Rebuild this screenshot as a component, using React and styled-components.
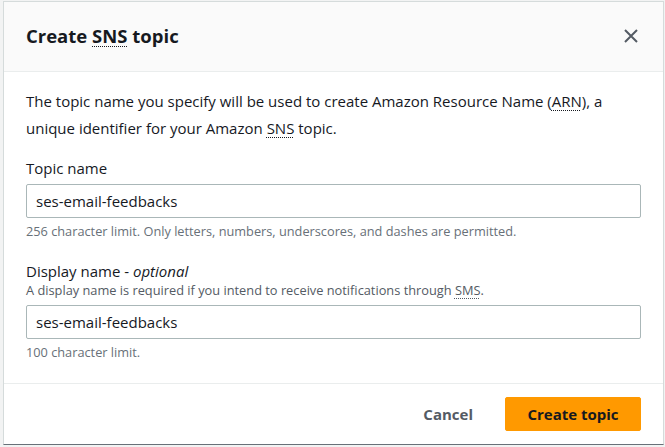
import React from "react";
import styled, { createGlobalStyle } from "styled-components";

const GlobalStyle = createGlobalStyle`
  html, body {
    margin: 0;
    padding: 0;
    background: #f2f3f3;
  }
  body {
    font-family: "Open Sans", Roboto, Arial, sans-serif;
    color: #16191f;
  }
  * { box-sizing: border-box; }
`;

const Page = styled.div`
  padding: 1px 1px 0 3px;
  width: 665px;
  height: 447px;
  overflow: hidden;
`;

const Modal = styled.div`
  width: 661px;
  background: #ffffff;
  border: 1px solid #d5dbdb;
  border-bottom: 1px solid #687078;
  display: flex;
  flex-direction: column;
`;

const Header = styled.div`
  height: 70px;
  background: #fafafa;
  border-bottom: 1px solid #eaeded;
  display: flex;
  align-items: center;
  justify-content: space-between;
  padding: 0 21px 0 22px;
`;

const Title = styled.h2`
  margin: 0;
  font-size: 18.5px;
  font-weight: 700;
  color: #16191f;
  line-height: 24px;
  margin-top: -2px;
`;

const Abbr = styled.abbr`
  text-decoration-line: underline;
  text-decoration-style: dotted;
  text-decoration-thickness: 1px;
  text-underline-offset: 3px;
  cursor: help;
`;

const CloseButton = styled.button`
  border: none;
  background: transparent;
  padding: 0;
  width: 22px;
  height: 22px;
  display: flex;
  align-items: center;
  justify-content: center;
  color: #545b64;
  cursor: pointer;
  margin-top: -2px;
`;

const Body = styled.div`
  padding: 16px 22px 23px 22px;
  border-bottom: 1px solid #eaeded;
`;

const Intro = styled.p`
  margin: 0 0 16px 0;
  font-size: 15px;
  line-height: 27px;
  color: #16191f;
`;

const Field = styled.div`
  display: flex;
  flex-direction: column;
  margin-top: ${(p) => p.$gap || 0}px;
`;

const Label = styled.label`
  font-size: 15px;
  line-height: 20px;
  color: #16191f;
`;

const Optional = styled.em`
  font-style: italic;
`;

const Description = styled.div`
  font-size: 12.8px;
  line-height: 16px;
  color: #545b64;
  margin-top: 1px;
`;

const Input = styled.input`
  margin-top: ${(p) => p.$top}px;
  width: 100%;
  height: 34px;
  border: 1px solid #aab7b8;
  border-radius: 2px;
  padding: 0 9px;
  font-family: inherit;
  font-size: 15px;
  color: #16191f;
  background: #fff;
  outline: none;
`;

const Hint = styled.div`
  margin-top: 5px;
  font-size: 12.75px;
  line-height: 16px;
  color: #687078;
`;

const Footer = styled.div`
  height: 60px;
  display: flex;
  align-items: center;
  justify-content: flex-end;
  gap: 12px;
  padding: 0 22px;
`;

const TextButton = styled.button`
  border: none;
  background: transparent;
  font-family: inherit;
  font-size: 15px;
  font-weight: 700;
  color: #545b64;
  padding: 0 20px;
  height: 34px;
  cursor: pointer;
`;

const PrimaryButton = styled.button`
  border: 1px solid #ff9900;
  background: #ff9900;
  border-radius: 2px;
  font-family: inherit;
  font-size: 15px;
  font-weight: 700;
  color: #16191f;
  width: 136px;
  height: 34px;
  cursor: pointer;
`;

export default function App() {
  return (
    <>
      <GlobalStyle />
      <Page>
        <Modal>
          <Header>
            <Title>
              Create <Abbr title="Simple Notification Service">SNS</Abbr> topic
            </Title>
            <CloseButton aria-label="Close">
              <svg width="16" height="16" viewBox="0 0 16 16">
                <path
                  d="M2 2 L14 14 M14 2 L2 14"
                  stroke="currentColor"
                  strokeWidth="2"
                  fill="none"
                />
              </svg>
            </CloseButton>
          </Header>
          <Body>
            <Intro>
              The topic name you specify will be used to create Amazon Resource Name (
              <Abbr title="Amazon Resource Name">ARN</Abbr>), a unique identifier for your Amazon{" "}
              <Abbr title="Simple Notification Service">SNS</Abbr> topic.
            </Intro>
            <Field>
              <Label>Topic name</Label>
              <Input $top={6} defaultValue="ses-email-feedbacks" />
              <Hint>
                256 character limit. Only letters, numbers, underscores, and dashes are permitted.
              </Hint>
            </Field>
            <Field $gap={22}>
              <Label>
                Display name - <Optional>optional</Optional>
              </Label>
              <Description>
                A display name is required if you intend to receive notifications through{" "}
                <Abbr title="Short Message Service">SMS</Abbr>.
              </Description>
              <Input $top={7} defaultValue="ses-email-feedbacks" />
              <Hint>100 character limit.</Hint>
            </Field>
          </Body>
          <Footer>
            <TextButton>Cancel</TextButton>
            <PrimaryButton>Create topic</PrimaryButton>
          </Footer>
        </Modal>
      </Page>
    </>
  );
}
